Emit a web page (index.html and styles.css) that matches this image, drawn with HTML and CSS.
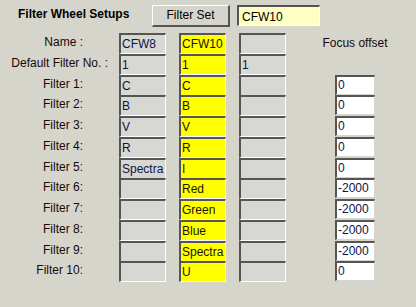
FILE: index.html
```html
<!DOCTYPE html>
<html lang="en">
<head>
    <meta charset="UTF-8">
    <title>Filter Wheel Setups</title>
    <link rel="stylesheet" href="styles.css">
</head>
<body>
    <div class="panel">
        <!-- Top bar -->
        <div class="top">
            <div class="title">Filter Wheel Setups</div>
            <button class="set-btn">Filter Set</button>
            <div class="current">CFW10</div>
        </div>

        <!-- Setup table -->
        <div class="grid">
            <div class="lbl">Name :</div>
            <div class="box">CFW8</div>
            <div class="box yel">CFW10</div>
            <div class="box"></div>
            <div class="focus">Focus offset</div>

            <div class="lbl wide">Default Filter No. :</div>
            <div class="box">1</div>
            <div class="box yel">1</div>
            <div class="box">1</div>
            <div></div>

            <div class="lbl">Filter 1:</div>
            <div class="box">C</div>
            <div class="box yel">C</div>
            <div class="box"></div>
            <div class="off">0</div>

            <div class="lbl">Filter 2:</div>
            <div class="box">B</div>
            <div class="box yel">B</div>
            <div class="box"></div>
            <div class="off">0</div>

            <div class="lbl">Filter 3:</div>
            <div class="box">V</div>
            <div class="box yel">V</div>
            <div class="box"></div>
            <div class="off">0</div>

            <div class="lbl">Filter 4:</div>
            <div class="box">R</div>
            <div class="box yel">R</div>
            <div class="box"></div>
            <div class="off">0</div>

            <div class="lbl">Filter 5:</div>
            <div class="box">Spectra</div>
            <div class="box yel">I</div>
            <div class="box"></div>
            <div class="off">0</div>

            <div class="lbl">Filter 6:</div>
            <div class="box"></div>
            <div class="box yel">Red</div>
            <div class="box"></div>
            <div class="off">-2000</div>

            <div class="lbl">Filter 7:</div>
            <div class="box"></div>
            <div class="box yel">Green</div>
            <div class="box"></div>
            <div class="off">-2000</div>

            <div class="lbl">Filter 8:</div>
            <div class="box"></div>
            <div class="box yel">Blue</div>
            <div class="box"></div>
            <div class="off">-2000</div>

            <div class="lbl">Filter 9:</div>
            <div class="box"></div>
            <div class="box yel">Spectra</div>
            <div class="box"></div>
            <div class="off">-2000</div>

            <div class="lbl">Filter 10:</div>
            <div class="box"></div>
            <div class="box yel">U</div>
            <div class="box"></div>
            <div class="off">0</div>
        </div>
    </div>
</body>
</html>
```

FILE: styles.css
```css
body {
    margin: 0;
    background: #d6d5cc;
    font-family: "Liberation Sans", Arial, sans-serif;
    font-size: 12px;
    color: #000;
}

.panel {
    width: 416px;
    height: 307px;
}

.top {
    display: flex;
    align-items: flex-start;
    height: 33px;
    padding-top: 5px;
    box-sizing: border-box;
}

.title {
    width: 134px;
    padding-left: 18px;
    margin-top: 2px;
    font-weight: bold;
    line-height: 14px;
}

.set-btn {
    width: 78px;
    height: 22px;
    margin: 0;
    padding: 0 0 1px 0;
    font-family: inherit;
    font-size: 12px;
    color: #000;
    background: #d6d5cc;
    border-top: 1px solid #fff;
    border-left: 1px solid #fff;
    border-right: 2px solid #555;
    border-bottom: 2px solid #555;
}

.current {
    width: 83px;
    height: 21px;
    margin-left: 7px;
    box-sizing: border-box;
    padding: 3px 0 0 3px;
    line-height: 15px;
    background: #ffffc4;
    border-top: 2px solid #555;
    border-left: 2px solid #555;
    border-right: 1px solid #fff;
    border-bottom: 1px solid #fff;
}

.grid {
    display: grid;
    grid-template-columns: 119px 60px 60px 96px 40px;
    grid-auto-rows: 20.75px;
}

.lbl {
    text-align: right;
    padding-right: 36px;
    padding-top: 2px;
    line-height: 14px;
    white-space: nowrap;
    color: #1a0808;
}

.lbl.wide {
    padding-right: 11px;
}

.box {
    width: 47px;
    height: 21px;
    box-sizing: border-box;
    padding: 2px 0 0 1px;
    line-height: 15px;
    white-space: nowrap;
    overflow: hidden;
    background: #d7d7d4;
    color: #0c1448;
    border-top: 2px solid #555;
    border-left: 2px solid #555;
    border-right: 1px solid #fff;
    border-bottom: 1px solid #fff;
}

.box.yel {
    background: #ffff00;
    color: #1a1400;
}

.focus {
    justify-self: center;
    white-space: nowrap;
    padding-top: 3px;
    line-height: 14px;
    color: #1a0808;
}

.off {
    width: 40px;
    height: 20px;
    box-sizing: border-box;
    padding: 1px 0 0 1px;
    line-height: 15px;
    background: #fff;
    color: #0c1448;
    border-top: 2px solid #555;
    border-left: 2px solid #555;
    border-right: 1px solid #d6d5cc;
    border-bottom: 1px solid #d6d5cc;
}
```
